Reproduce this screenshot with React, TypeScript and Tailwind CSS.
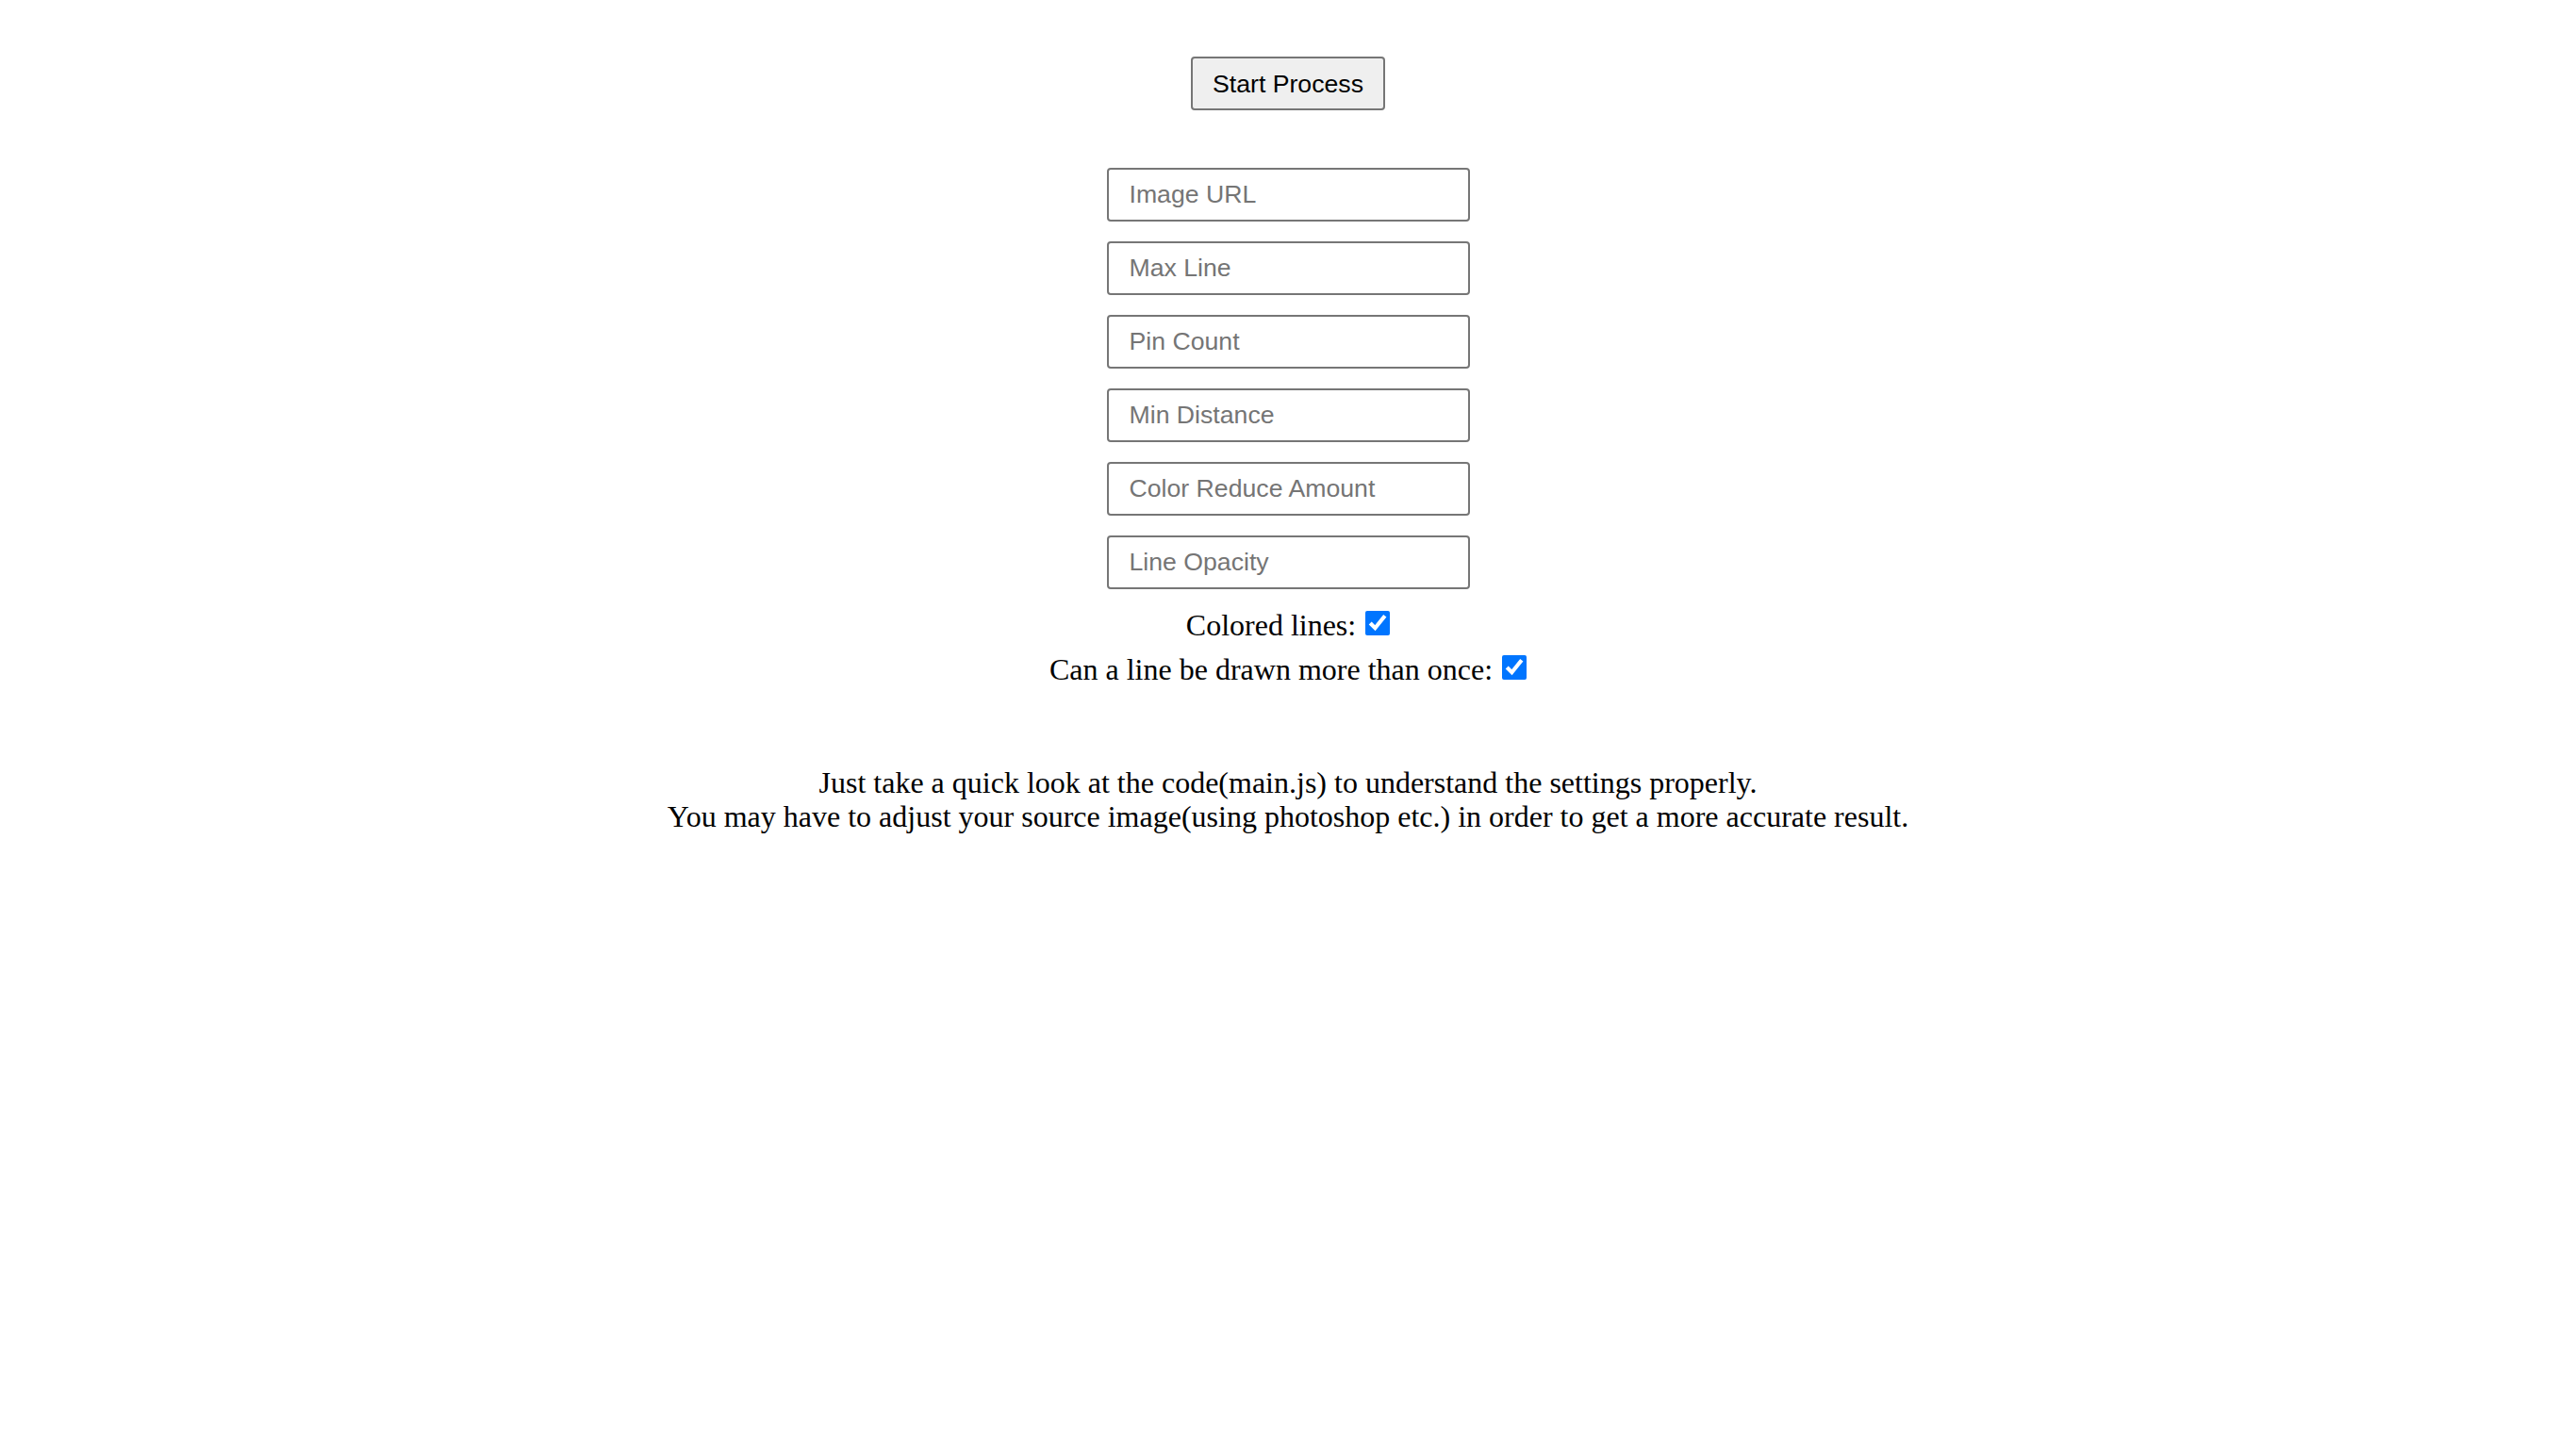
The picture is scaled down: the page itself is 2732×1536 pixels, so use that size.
import React from 'react';

const fields = ['Image URL', 'Max Line', 'Pin Count', 'Min Distance', 'Color Reduce Amount', 'Line Opacity'];

function CheckRow({ label }: { label: string }) {
  return (
    <label className="block h-[47px] leading-[47px] text-[32px] text-black">
      {label}
      <input
        type="checkbox"
        defaultChecked
        className="ml-[10px] w-[26px] h-[26px] m-0 align-baseline accent-[#0075ff]"
      />
    </label>
  );
}

export default function App() {
  return (
    <div className="min-h-screen bg-white flex flex-col items-center text-center font-['Liberation_Serif',serif]">
      <button className="mt-[60px] w-[206px] h-[57px] bg-[#efefef] border-2 border-[#767676] rounded-[4px] text-[26.67px] text-black font-['Liberation_Sans',Arial,sans-serif] flex items-center justify-center">
        Start Process
      </button>

      <div className="mt-[61px] flex flex-col gap-[21px]">
        {fields.map((f) => (
          <input
            key={f}
            type="text"
            placeholder={f}
            className="w-[385px] h-[57px] border-2 border-[#767676] rounded-[4px] px-[22px] text-[26.67px] text-black placeholder:text-[#757575] font-['Liberation_Sans',Arial,sans-serif] bg-white"
          />
        ))}
      </div>

      <div className="mt-[15px] flex flex-col items-center">
        <CheckRow label="Colored lines:" />
        <CheckRow label="Can a line be drawn more than once:" />
      </div>

      <p className="mt-[79px] text-[32px] leading-[35.6px] text-black">
        Just take a quick look at the code(main.js) to understand the settings properly.
        <br />
        You may have to adjust your source image(using photoshop etc.) in order to get a more accurate result.
      </p>
    </div>
  );
}
